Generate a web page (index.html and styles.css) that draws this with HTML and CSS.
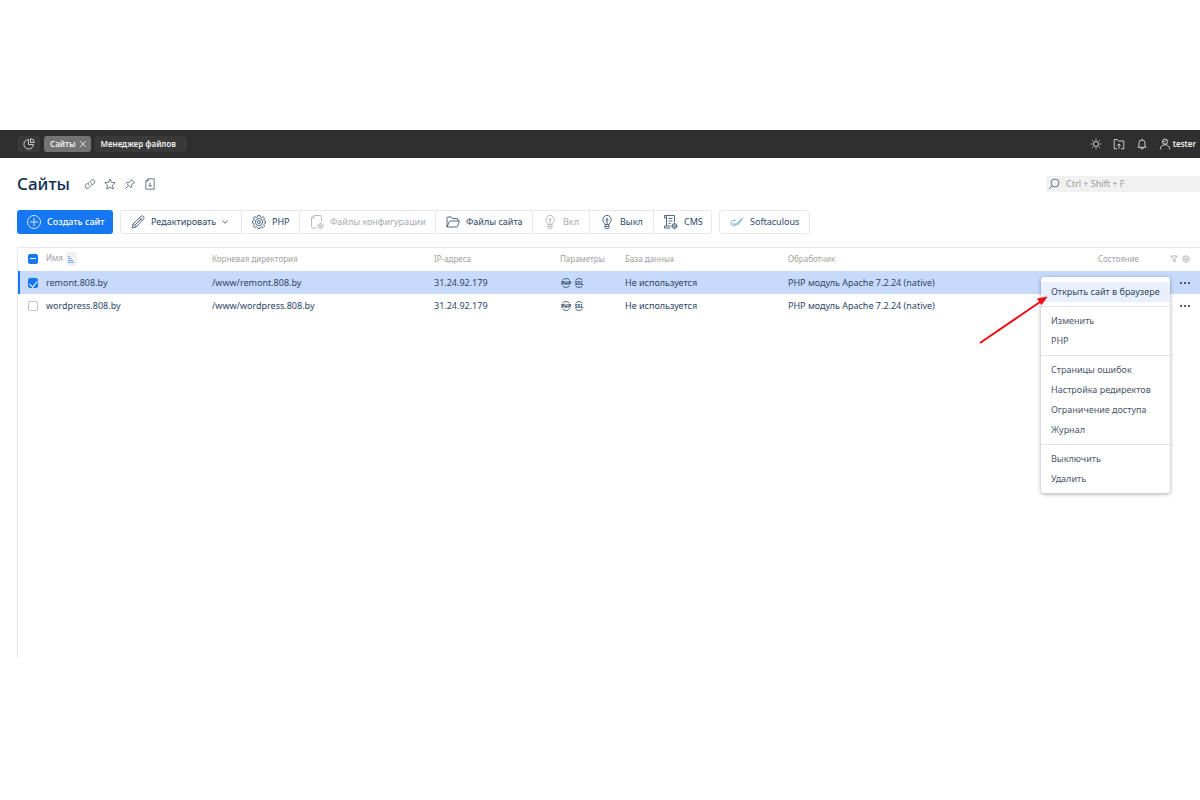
FILE: index.html
```html
<!DOCTYPE html>
<html lang="ru">

<head>
    <title>Сайты</title>
    <meta charset="utf-8">
    <meta name="viewport" content="width=device-width, initial-scale=1">
    <link rel="stylesheet" href="styles.css">
</head>

<body>

<!-- shared icons -->
<svg class="sprite">
    <symbol id="gear" viewBox="0 0 16 16">
        <path d="M7 1.500h2l.5 1.500 1.200.5 1.500-.7 1.300 1.300-.7 1.500.5 1.200 1.200.4v1.800l-1.200.5-.5 1.200.7 1.500-1.300 1.300-1.500-.7-1.200.5L9 14.500H7l-.5-1.200-1.200-.5-1.500.7-1.300-1.300.7-1.500-.5-1.200L1.500 9V7.200L2.700 6.700l.5-1.200-.7-1.500 1.300-1.300 1.500.7 1.200-.5z"/>
        <circle cx="8" cy="8" r="3.600"/>
        <circle cx="8" cy="8" r="1.500"/>
    </symbol>
    <symbol id="bulb" viewBox="0 0 16 16">
        <path d="M6 10.500C5.700 8.800 3.800 8 3.800 5.600a4.200 4.200 0 0 1 8.400 0c0 2.400-1.900 3.200-2.200 4.900zM6 10.500v3l.8 1.200h2.400l.8-1.200v-3M6 12.500h4"/>
        <path d="M8 10.500V6.500"/>
        <circle cx="8" cy="5.500" r="1"/>
    </symbol>
    <symbol id="php" viewBox="0 0 12 12">
        <path d="M2.500 3.200a4.500 4.500 0 0 1 7 0M2.500 8.800a4.500 4.500 0 0 0 7 0"/>
        <text x="6" y="7.800">PHP</text>
    </symbol>
    <symbol id="ssl" viewBox="0 0 12 12">
        <path d="M2.500 3.200a4.500 4.500 0 0 1 7 0M2.500 8.800a4.500 4.500 0 0 0 7 0"/>
        <text x="6" y="7.800">SSL</text>
    </symbol>
</svg>

<header class="topbar">
    <nav class="tabs">
        <button class="tab tab-icon" aria-label="Панель">
            <svg class="icon" viewBox="0 0 12 12"><path d="M5.500 1.500a4.800 4.800 0 1 0 5 5h-5zM7.500.8v3.700h3.700A3.800 3.800 0 0 0 7.500.8z"/></svg>
        </button>
        <button class="tab tab-active">Сайты
            <svg class="close" viewBox="0 0 8 8"><path d="M1 1l6 6M7 1L1 7"/></svg>
        </button>
        <button class="tab tab-wide">Менеджер файлов</button>
    </nav>
    <div class="tools">
        <button aria-label="Тема"><svg class="icon" viewBox="0 0 12 12"><circle cx="6" cy="6" r="2.600"/><path d="M6 .8v1.400M6 9.800v1.400M.8 6h1.400M9.800 6h1.400M2.300 2.300l1 1M8.700 8.700l1 1M9.700 2.300l-1 1M3.300 8.700l-1 1"/></svg></button>
        <button aria-label="Загрузки"><svg class="icon" viewBox="0 0 12 12"><path d="M4 10.800H1.200V1.500h3L5.500 3h5.300v7.800H8M6 10.800V6M4.300 7.600 6 5.900l1.700 1.700"/></svg></button>
        <button aria-label="Уведомления"><svg class="icon" viewBox="0 0 12 12"><path d="M2 9.300h8L9 8V5a3 3 0 0 0-6 0v3zM4.500 9.500a1.500 1.500 0 0 0 3 0M6 2V.8"/></svg></button>
        <button class="user"><svg class="icon" viewBox="0 0 12 12"><circle cx="6" cy="3.600" r="2.600"/><path d="M1.200 11.500c.3-3 2-4.800 4.800-4.800s4.500 1.800 4.800 4.800M3.500 3.500c2 .5 3-.2 3.500-1"/></svg>tester</button>
    </div>
</header>

<main class="page">
    <div class="heading">
        <h1>Сайты</h1>
        <button aria-label="Ссылка"><svg class="icon" viewBox="0 0 12 12"><path d="M5 7.500C4 6.500 4 5.500 4.800 4.700l2.400-2.400c1-1 2.300-.8 3 0s.8 2 0 2.900L8.500 7M7 4.500c1 1 1 2 .2 2.800L4.800 9.700c-1 1-2.300.8-3 0s-.8-2 0-2.900L3.500 5"/></svg></button>
        <button aria-label="Избранное"><svg class="icon" viewBox="0 0 12 12"><path d="M6 1l1.500 3.300 3.700.4-2.700 2.500.7 3.700L6 9.100l-3.200 1.800.7-3.700L.8 4.700l3.700-.4z"/></svg></button>
        <button aria-label="Закрепить"><svg class="icon" viewBox="0 0 12 12"><path d="M7.200 1.500l3.300 3.300-1.100.2-1.900 1.900.1 2-.8.8L2.300 5.200l.8-.8 2 .1L7 2.600zM4.500 7.500 1.200 10.800"/></svg></button>
        <button aria-label="Экспорт"><svg class="icon" viewBox="0 0 12 12"><path d="M4 .8h6.200v10.400H1.800V3zM4 .8V3H1.800M6 4.500v4M4.300 6.900 6 8.600l1.700-1.700"/></svg></button>
        <label class="search">
            <svg class="icon" viewBox="0 0 12 12"><circle cx="7" cy="5" r="4"/><path d="M4.200 7.800 1 11"/></svg>
            <input type="search" placeholder="Ctrl + Shift + F" aria-label="Поиск">
        </label>
    </div>

    <div class="toolbar">
        <button class="btn btn-primary"><svg class="icon-lg" viewBox="0 0 16 16"><circle cx="8" cy="8" r="6.500"/><path d="M8 4v8M4 8h8"/></svg>Создать сайт</button>
        <div class="btn-group">
            <button class="btn btn-edit"><svg class="icon-lg" viewBox="0 0 16 16"><path d="M2 14l1-4L10.800 2.500c.9-.9 2-.7 2.600 0s.8 1.800 0 2.700L6 13zM3 10l3 3M9.500 3.800l2.800 2.800M11.500 4.500 4.500 11.500"/></svg>Редактировать
                <svg class="chevron" viewBox="0 0 8 8"><path d="M1.500 2.500 4 5.300l2.500-2.800"/></svg></button>
            <button class="btn btn-php"><svg class="icon-lg"><use href="#gear"/></svg>PHP</button>
            <button class="btn btn-config" disabled><svg class="icon-lg" viewBox="0 0 16 16"><path d="M7.500 14H4a1.500 1.500 0 0 1-1.500-1.500V4L5 1.500h6A1.500 1.500 0 0 1 12.500 3v5M5 1.500V4H2.500"/><circle cx="11.500" cy="12" r="2.300"/><circle cx="11.500" cy="12" r=".8"/><path d="M11.500 8.800v1M11.500 14.200v1M8.300 12h1M13.700 12h1"/></svg>Файлы конфигурации</button>
            <button class="btn btn-files"><svg class="icon-lg" viewBox="0 0 16 16"><path d="M2 13V4a1 1 0 0 1 1-1h3l1.500 1.500H12a1 1 0 0 1 1 1V7M2 13l2.300-5.300A1 1 0 0 1 5.200 7H14.500l-2 5.300a1 1 0 0 1-1 .7z"/></svg>Файлы сайта</button>
            <button class="btn btn-on" disabled><svg class="icon-lg"><use href="#bulb"/></svg>Вкл</button>
            <button class="btn btn-off"><svg class="icon-lg"><use href="#bulb"/></svg>Выкл</button>
            <button class="btn btn-cms"><svg class="icon-lg" viewBox="0 0 16 16"><path d="M7.500 14h-6v-2H3.500M3.500 12V1.500h8V8M3.500 1.500h-2V4h2M5.500 4.500h4M5.500 7h4M5.500 9.500h2M3.500 12H7.500"/><circle cx="11.500" cy="12" r="2.300"/><circle cx="11.500" cy="12" r=".8"/><path d="M11.500 8.700v1M11.500 14.300v1M8.200 12h1M13.800 12h1M9.200 9.700l.7.7M13.100 13.600l.7.7M13.800 9.700l-.7.7M9.900 13.600l-.7.7"/></svg>CMS</button>
        </div>
        <div class="btn-group">
            <button class="btn btn-soft"><svg class="icon-lg" viewBox="0 0 16 16"><path class="blue" d="M7 6.500C4 5.500 1.500 7.500 2 9.500s3.500 2.500 5.500 1M8.500 11.500 14 3.500"/><path class="teal" d="M4 9c1 2 3 1.500 4-.5M7.500 10.500 12 5"/></svg>Softaculous</button>
        </div>
    </div>

    <div class="list">
        <table>
            <colgroup>
                <col class="c-check"><col class="c-name"><col class="c-dir"><col class="c-ip"><col class="c-params"><col class="c-db"><col><col class="c-state"><col class="c-actions">
            </colgroup>
            <thead>
            <tr>
                <th><input class="check partial" type="checkbox" checked aria-label="Выбрать все"></th>
                <th>Имя <span class="sort"><svg viewBox="0 0 8 8"><path d="M1 1.500h2M1 3.500h3.500M1 5.500h5M1 7.300h6.500"/></svg></span></th>
                <th>Корневая директория</th>
                <th>IP-адреса</th>
                <th>Параметры</th>
                <th>База данных</th>
                <th>Обработчик</th>
                <th>Состояние</th>
                <th>
                    <div class="filters">
                        <svg viewBox="0 0 8 8"><path d="M.8 1h6.400L5 4v3L3.300 5.800V4z"/></svg>
                        <svg viewBox="0 0 8 8"><path d="M4 .6 7 2.300v3.400L4 7.400 1 5.700V2.300z"/><circle cx="4" cy="4" r="1.300"/></svg>
                    </div>
                </th>
            </tr>
            </thead>
            <tbody>
            <tr class="selected">
                <td><input class="check" type="checkbox" checked aria-label="remont.808.by"></td>
                <td>remont.808.by</td>
                <td>/www/remont.808.by</td>
                <td>31.24.92.179</td>
                <td><svg class="badge"><use href="#php"/></svg><svg class="badge"><use href="#ssl"/></svg></td>
                <td>Не используется</td>
                <td>PHP модуль Apache 7.2.24 (native)</td>
                <td></td>
                <td><button class="more" aria-label="Меню"><svg viewBox="0 0 12 4"><circle cx="2" cy="2" r="1"/><circle cx="6" cy="2" r="1"/><circle cx="10" cy="2" r="1"/></svg></button></td>
            </tr>
            <tr>
                <td><input class="check" type="checkbox" aria-label="wordpress.808.by"></td>
                <td>wordpress.808.by</td>
                <td>/www/wordpress.808.by</td>
                <td>31.24.92.179</td>
                <td><svg class="badge"><use href="#php"/></svg><svg class="badge"><use href="#ssl"/></svg></td>
                <td>Не используется</td>
                <td>PHP модуль Apache 7.2.24 (native)</td>
                <td></td>
                <td><button class="more" aria-label="Меню"><svg viewBox="0 0 12 4"><circle cx="2" cy="2" r="1"/><circle cx="6" cy="2" r="1"/><circle cx="10" cy="2" r="1"/></svg></button></td>
            </tr>
            </tbody>
        </table>

        <div class="menu">
            <div class="menu-group">
                <button class="current">Открыть сайт в браузере</button>
            </div>
            <div class="menu-group">
                <button>Изменить</button>
                <button>PHP</button>
            </div>
            <div class="menu-group">
                <button>Страницы ошибок</button>
                <button>Настройка редиректов</button>
                <button>Ограничение доступа</button>
                <button>Журнал</button>
            </div>
            <div class="menu-group">
                <button>Выключить</button>
                <button>Удалить</button>
            </div>
        </div>

        <svg class="arrow" viewBox="0 0 70 50">
            <path class="line" d="M1 48 61 7"/>
            <path class="head" d="M68 2 62.500 9.500 58.500 3.800z"/>
        </svg>
    </div>
</main>

</body>

</html>
```
FILE: styles.css
```css
* {
    box-sizing: border-box;
}

body {
    margin: 0;
    padding-top: 130px;
    background: #fff;
    color: #2c4566;
    font-family: "Noto Sans", sans-serif;
    font-size: 9px;
    line-height: 12px;
    overflow-x: hidden;
}

button {
    padding: 0;
    border: none;
    background: none;
    color: inherit;
    font: inherit;
    white-space: nowrap;
}

svg {
    fill: none;
    stroke: currentColor;
    stroke-width: 0.8;
    flex-shrink: 0;
}

.sprite {
    display: none;
}

.icon {
    display: block;
    width: 12px;
    height: 12px;
}

.icon-lg {
    width: 16px;
    height: 16px;
}

/* top bar */
.topbar {
    display: flex;
    justify-content: space-between;
    align-items: center;
    height: 28px;
    padding: 0 4px 1px 18px;
    background: #2f2f2f;
    color: #f0f0f0;
    font-size: 8px;
    font-weight: 600;
}

.tabs {
    display: flex;
    gap: 4px;
}

.tab {
    display: flex;
    align-items: center;
    gap: 3px;
    height: 16px;
    padding: 0 6px;
    border-radius: 3px;
    background: #393939;
}

.tab-icon {
    padding: 0 5px;
}

.tab-active {
    padding-right: 4px;
    background: #747474;
}

.tab-wide {
    min-width: 92px;
}

.close {
    width: 8px;
    height: 8px;
}

.tools {
    display: flex;
    gap: 11px;
}

.user {
    display: flex;
    align-items: center;
    gap: 2px;
}

/* title */
.page {
    padding-left: 17px;
}

.heading {
    display: flex;
    align-items: center;
    gap: 8px;
    height: 52px;
    color: #4a5568;
}

.heading h1 {
    margin: 0 6px 0 0;
    color: #0f2d52;
    font-size: 17px;
    font-weight: 500;
    line-height: 24px;
}

.search {
    display: flex;
    align-items: center;
    gap: 6px;
    width: 154px;
    height: 16px;
    margin-left: auto;
    padding-left: 2px;
    border-radius: 3px 0 0 3px;
    background: #f1f1f1;
}

.search input {
    width: 100%;
    padding: 0;
    border: none;
    outline: none;
    background: none;
    font: inherit;
}

.search input::placeholder {
    color: #9a9a9a;
}

/* buttons */
.toolbar {
    display: flex;
    gap: 7px;
}

.btn {
    display: flex;
    align-items: center;
    height: 22px;
    gap: 5px;
    padding: 0 9px;
}

.btn-primary {
    width: 96px;
    height: 24px;
    border-radius: 3px;
    background: #1677f2;
    color: #fff;
    font-weight: 500;
}

.btn-group {
    display: flex;
    border: 1px solid #e6e8eb;
    border-radius: 3px;
}

.btn-group .btn + .btn {
    border-left: 1px solid #e6e8eb;
}

.btn:disabled {
    color: #a7abb0;
}

.btn-edit {
    width: 120px;
}

.btn-php {
    width: 58px;
}

.btn-config {
    width: 136px;
}

.btn-files {
    width: 97px;
}

.btn-on {
    width: 57px;
}

.btn-off {
    width: 64px;
}

.btn-cms {
    width: 58px;
}

.btn-soft {
    width: 89px;
}

.chevron {
    width: 8px;
    height: 8px;
}

.blue {
    stroke: #4a90d9;
}

.teal {
    stroke: #46b3b8;
}

/* table */
.list {
    position: relative;
    min-height: 411px;
    margin-top: 13px;
    border-top: 1px solid #e6e8eb;
    border-left: 1px solid #e6e8eb;
    border-top-left-radius: 3px;
}

table {
    width: 100%;
    table-layout: fixed;
    border-collapse: collapse;
}

th,
td {
    height: 23px;
    padding: 0;
    text-align: left;
    white-space: nowrap;
    vertical-align: middle;
}

th {
    padding-bottom: 1px;
    color: #a0a0a0;
    font-size: 8px;
    font-weight: 400;
}

.c-check {
    width: 28px;
}

.c-name {
    width: 166px;
}

.c-dir {
    width: 222px;
}

.c-ip {
    width: 126px;
}

.c-params {
    width: 65px;
}

.c-db {
    width: 163px;
}

.c-state {
    width: 72px;
}

.c-actions {
    width: 30px;
}

.selected {
    background: #c7dafc;
    box-shadow: inset 2px 0 #1677f2;
}

.check {
    appearance: none;
    display: block;
    width: 10px;
    height: 10px;
    margin: 0 0 0 10px;
    border: 1px solid #bfc4ca;
    border-radius: 2px;
    background: #fff;
}

.check:checked {
    border-color: #1677f2;
    background: #1677f2;
}

.check:checked::before {
    content: "";
    display: block;
    width: 4px;
    height: 7px;
    margin: 0 auto;
    border: solid #fff;
    border-width: 0 1px 1px 0;
    transform: rotate(40deg);
}

.check.partial::before {
    width: 6px;
    height: 1px;
    margin: 3px 1px;
    border: none;
    background: #fff;
    transform: none;
}

.sort {
    display: inline-flex;
    align-items: center;
    justify-content: center;
    width: 11px;
    height: 14px;
    margin-left: 1px;
    border-radius: 2px;
    background: #f0f1f3;
    vertical-align: middle;
}

.sort svg {
    width: 8px;
    height: 8px;
    stroke: #5b93ea;
}

.filters {
    display: flex;
    gap: 4px;
}

.filters svg {
    width: 8px;
    height: 8px;
}

.badge {
    width: 12px;
    height: 12px;
    margin-right: 1px;
    vertical-align: middle;
}

#php text,
#ssl text {
    fill: currentColor;
    stroke: none;
    font-size: 5px;
    font-weight: 800;
    text-anchor: middle;
}

.more {
    display: block;
    margin-left: 9px;
}

.more svg {
    display: block;
    width: 12px;
    height: 4px;
    fill: #1f2937;
    stroke: none;
}

/* row menu */
.menu {
    position: absolute;
    top: 29px;
    right: 30px;
    width: 129px;
    border-radius: 3px;
    background: #fff;
    box-shadow: 0 1px 4px rgba(0, 0, 0, 0.35);
}

.menu-group {
    padding: 4px 0;
}

.menu-group:first-child {
    padding-top: 5px;
}

.menu-group + .menu-group {
    border-top: 1px solid #e2e4e7;
}

.menu-group button {
    display: block;
    width: 100%;
    height: 20px;
    padding: 0 10px;
    color: #4c5568;
    text-align: left;
}

.menu-group .current {
    background: #e9f0fd;
    color: #2c4566;
}

.arrow {
    position: absolute;
    top: 47px;
    right: 151px;
    width: 70px;
    height: 50px;
    color: #f00a14;
}

.arrow .line {
    stroke-width: 2;
}

.arrow .head {
    fill: currentColor;
}
```
